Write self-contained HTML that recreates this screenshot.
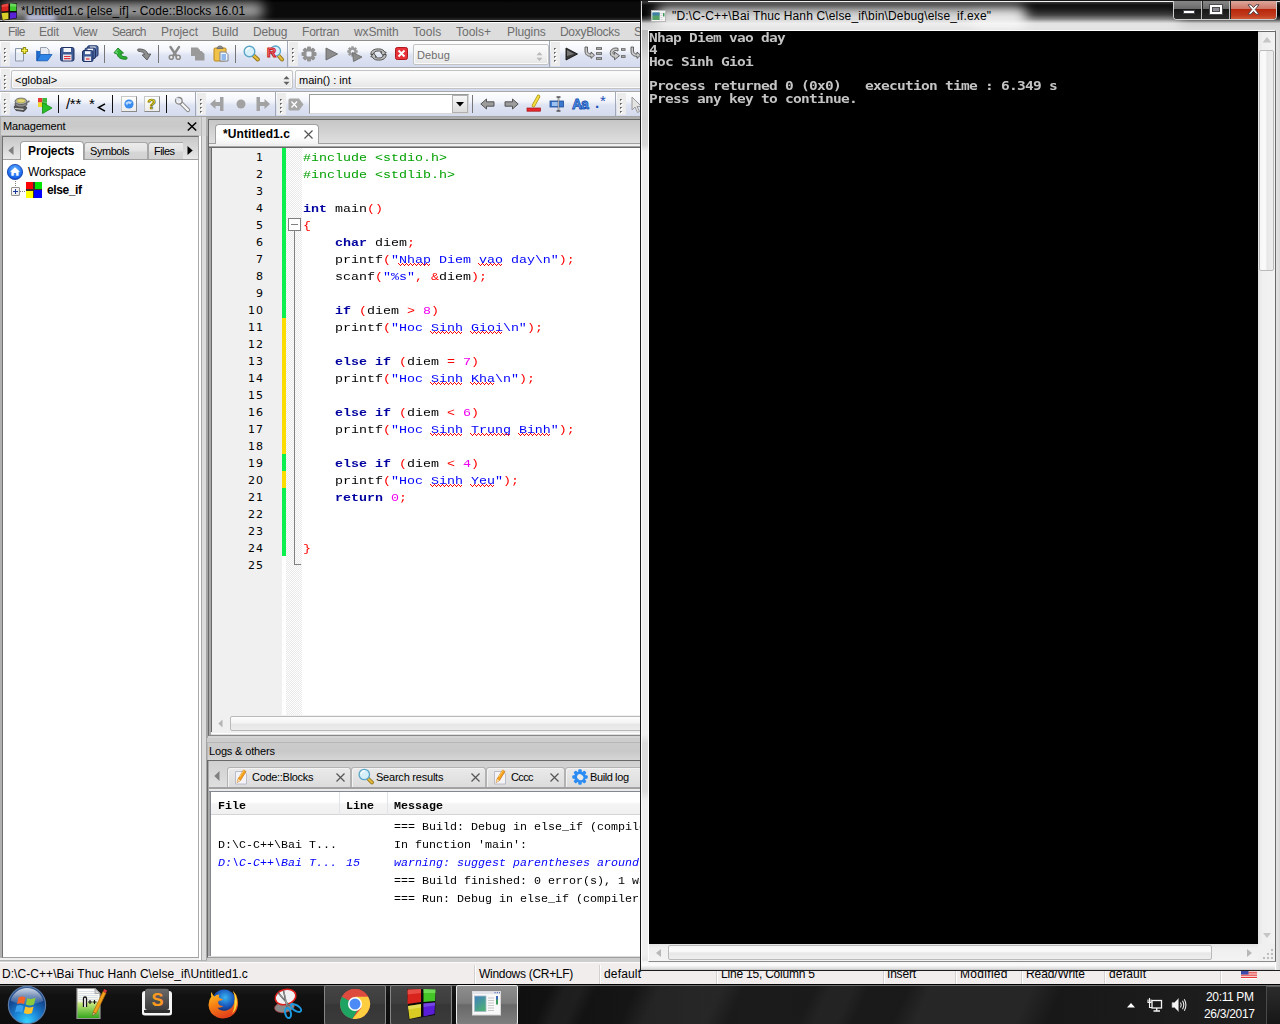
<!DOCTYPE html>
<html><head><meta charset="utf-8"><title>Code::Blocks</title>
<style>
*{box-sizing:border-box;margin:0;padding:0}
html,body{width:1280px;height:1024px;overflow:hidden;background:#000}
body{position:relative;font-family:"Liberation Sans",sans-serif;font-size:12px;color:#000}
.a{position:absolute}
.t{position:absolute;white-space:pre;line-height:14px}
svg{position:absolute;overflow:visible}
#cb{position:absolute;left:0;top:0;width:1280px;height:984px;background:#d4d4d4;overflow:hidden}
#cbtitle{left:0;top:0;width:1280px;height:22px;background:linear-gradient(#000 0,#0b0b0b 3px,#0b0b0b 17px,#2a2a2a 20px,#bdbdbd 20px,#bdbdbd 21px,#000 21px);overflow:hidden}
#menubar{left:0;top:22px;width:1280px;height:19px;background:#dddddd;border-top:1px solid #fff;border-bottom:1px solid #8e8e8e}
#menubar .t{top:2px;color:#6d6d6d;font-size:12px}
.tb{position:absolute;background:linear-gradient(#fefefe 0,#f3f5fb 38%,#dfe4f3 55%,#d4dbee 100%);border-right:1px solid #a2a8b8}
.grip{position:absolute;left:1px;top:1px;width:9px;bottom:1px;background:#ececec}
.grip i{position:absolute;left:3px;width:1px;height:1px;background:#5e5e5e;box-shadow:1px 0 0 #8a8a8a,0 1px 0 #8a8a8a,1px 1px 0 #fff,2px 1px 0 #fff,1px 2px 0 #fff}
.sep{position:absolute;width:1px;background:#777}
.combo{position:absolute;border:1px solid #c3c3c3;border-radius:2px;background:linear-gradient(#fdfdfd 0,#f2f2f2 50%,#e6e6e6 100%);box-shadow:inset 0 0 0 1px #fafafa}
#code .t{font-family:"Liberation Mono",monospace;font-size:11.667px;line-height:17px;height:17px;margin-top:1.5px;transform:scaleX(1.1428);transform-origin:0 0}
#code .t i{font-style:normal}
.ln{position:absolute;left:0;width:52px;text-align:right;letter-spacing:1px;font-family:"DejaVu Sans",sans-serif;font-size:11px;line-height:17px;height:17px;color:#000;margin-top:1px}
.k{color:#0000a0;font-weight:bold}.p{color:#00a000}.o{color:#ff0000}.s{color:#0000ff}.n{color:#f000f0}
.sq{position:absolute;height:3px;background:linear-gradient(90deg,#f00 0 25%,transparent 25%) 0 0/4px 1px repeat-x,linear-gradient(90deg,transparent 0 25%,#f00 25% 50%,transparent 50% 75%,#f00 75%) 0 1px/4px 1px repeat-x,linear-gradient(90deg,transparent 0 50%,#f00 50% 75%,transparent 75%) 0 2px/4px 1px repeat-x}
.ltab{top:29px;height:21px;background:linear-gradient(#eaeaea,#dbdbdb);border:1px solid #b2b2b2;border-bottom:0;border-radius:3px 3px 0 0;box-shadow:inset 1px 1px 0 #f3f3f3}
.lt{position:absolute;white-space:pre;font-family:"Liberation Mono",monospace;font-size:10.21px;line-height:13px;color:#000;transform:scaleX(1.1428);transform-origin:0 0}
.lt.w{color:#0000ff;font-style:italic}
.ss{position:absolute;top:2px;width:1px;height:19px;background:#d4d0d0;box-shadow:1px 0 0 #fff}
#ctext{font-family:"DejaVu Sans Mono","Liberation Mono",monospace;font-weight:bold;font-size:14.5px;letter-spacing:-.729px;line-height:14.118px;color:#c4c4c4;white-space:pre;transform:scaleY(.85);transform-origin:0 0}
#ctext div{height:14.118px}
.tbtn{top:1px;height:40px;background:linear-gradient(#454545 0,#3d3d3d 45%,#363636 50%,#3b3b3b 100%);border:1px solid #858585;border-radius:2px}
.mono{font-family:"Liberation Mono",monospace}
</style></head>
<body>
<div id="cb">
  <div id="cbtitle" class="a">
    <div class="a" style="left:2px;top:3px;width:262px;height:15px;background:#fff;opacity:.66;filter:blur(6px);border-radius:8px"></div>
    <div class="a" style="left:26px;top:15px;width:30px;height:5px;background:#d4d8ff;opacity:.95;filter:blur(2px);border-radius:3px"></div>
    <svg style="left:1px;top:2px" width="17" height="19" viewBox="0 0 16 18">
      <path d="M0 2 L15 1.200 L15 15.500 L1.200 17.500 Z" fill="#0a0a0a"/><path d="M0.5 2.5 L7 1.5 L7 8.5 L0.5 9 Z" fill="#d8231f"/><path d="M0.5 2.5 L7 1.5 L7 4 L0.5 5 Z" fill="#f0605a" opacity=".6"/>
      <path d="M8.5 1.5 L14.5 2 L14.5 8.5 L8.5 8.5 Z" fill="#3fc82c"/><path d="M8.5 1.5 L14.5 2 L14.5 4.5 L8.5 4 Z" fill="#8be87c" opacity=".6"/>
      <path d="M0.5 10.5 L7 10 L7 16 L1.5 17 Z" fill="#d9cf2a"/>
      <path d="M8.5 10 L14.5 10 L14.5 15 L8.5 16 Z" fill="#5a22d8"/>
    </svg>
    <div class="t" style="left:21px;top:4px;font-size:12px;letter-spacing:.08px">*Untitled1.c [else_if] - Code::Blocks 16.01</div>
  </div>
  <div id="menubar" class="a"><div class="t" style="left:8px;letter-spacing:-0.61px">File</div><div class="t" style="left:39px;letter-spacing:-0.23px">Edit</div><div class="t" style="left:73px;letter-spacing:-0.43px">View</div><div class="t" style="left:112px;letter-spacing:-0.71px">Search</div><div class="t" style="left:161px;letter-spacing:-0.06px">Project</div><div class="t" style="left:212px;letter-spacing:-0.05px">Build</div><div class="t" style="left:253px;letter-spacing:-0.22px">Debug</div><div class="t" style="left:302px;letter-spacing:-0.2px">Fortran</div><div class="t" style="left:354px;letter-spacing:-0.1px">wxSmith</div><div class="t" style="left:413px;letter-spacing:0.06px">Tools</div><div class="t" style="left:456px;letter-spacing:0px">Tools+</div><div class="t" style="left:507px;letter-spacing:-0.1px">Plugins</div><div class="t" style="left:560px;letter-spacing:-0.3px">DoxyBlocks</div><div class="t" style="left:634px;letter-spacing:-0.3px">Settings</div></div>
  <div id="toolbars" class="a" style="left:0;top:41px;width:1280px;height:75px;background:#f0f0f0">
    <!-- row 1 : y 41..66 -->
    <div class="tb" style="left:0;top:0;width:288px;height:26px">
      <div class="grip"><i style="top:6px"></i><i style="top:10px"></i><i style="top:14px"></i><i style="top:18px"></i></div>
      <!-- new -->
      <svg style="left:14px;top:5px" width="16" height="16" viewBox="0 0 16 16"><path d="M1.5 2.5h8v12.5h-8z" fill="#e4eaf4" stroke="#8d97aa"/><path d="M2.5 3.5h6v3h-6z" fill="#fff" opacity=".8"/><path d="M10.5 1v7M7 4.5h7" stroke="#8f8a10" stroke-width="3.2"/><path d="M10.5 2v5M8 4.5h5" stroke="#f4ee4a" stroke-width="1.4"/></svg>
      <!-- open -->
      <svg style="left:36px;top:5px" width="17" height="16" viewBox="0 0 17 16"><path d="M4.5 1.5h6l2.5 2.5v6h-8.500z" fill="#e8ecf2" stroke="#98a0ae"/><path d="M0.800 5h3.500v9.500h-3.500z" fill="#1f6fd0"/><path d="M0.800 14.800 L4.500 8.500 H16 L11.500 14.800 Z" fill="#2f86e6" stroke="#1558b0" stroke-width=".8"/><path d="M0.800 4.500v10.300" stroke="#1558b0"/></svg>
      <!-- save -->
      <svg style="left:60px;top:5px" width="15" height="16" viewBox="0 0 15 16"><rect x=".5" y="1.500" width="13.500" height="13.500" rx="1.800" fill="#3d5a94" stroke="#1f3263"/><rect x="3.500" y="2" width="7.500" height="4" fill="#f4f6fa"/><rect x="3" y="8.500" width="8.500" height="6" fill="#e9e4ea"/><path d="M4 10.500h6.500M4 12.700h6.500" stroke="#e0303a" stroke-width="1.200"/></svg>
      <!-- save all -->
      <svg style="left:82px;top:4px" width="17" height="18" viewBox="0 0 17 18"><rect x="5.500" y=".8" width="10.500" height="10.500" rx="1.500" fill="#5671a8" stroke="#1f3263"/><rect x="8" y="1.500" width="5.500" height="2.500" fill="#f4f6fa"/><rect x="3" y="3" width="10.500" height="10.500" rx="1.500" fill="#4c679f" stroke="#1f3263"/><rect x="5.500" y="3.700" width="5.500" height="2.500" fill="#f4f6fa"/><rect x=".5" y="5.500" width="10.500" height="11" rx="1.500" fill="#3d5a94" stroke="#1f3263"/><rect x="3" y="6.200" width="5.500" height="3" fill="#f4f6fa"/><rect x="2.500" y="11.500" width="6.500" height="4.500" fill="#e9e4ea"/><path d="M4 14h3.500" stroke="#e0303a" stroke-width="1.300"/></svg>
      <div class="sep" style="left:104px;top:4px;height:18px"></div>
      <!-- undo -->
      <svg style="left:113px;top:6px" width="15" height="14" viewBox="0 0 15 14"><path d="M5 1 L1 5.800 L4.300 7.200 C4.800 10.500 7.500 12.300 13 12.300 C14.500 12.300 14.500 9.800 13 9.800 C10 9.800 8.300 9 7.800 6.500 L10.500 6 Z" fill="#2cb034" stroke="#157a1c" stroke-width=".9" stroke-linejoin="round"/><path d="M5 2.500 L2.500 5.300 L5 6.300" fill="none" stroke="#8be890" stroke-width=".9"/></svg>
      <!-- redo -->
      <svg style="left:137px;top:6px" width="15" height="14" viewBox="0 0 15 14"><path d="M1.200 2 C0.400 2 0.400 4.200 1.500 4.300 C5 4.600 7 5.500 7.500 7.500 L5.200 8 L10 13 L13.800 7 L10.800 7.200 C10 3.500 6.500 1.800 1.200 2 Z" fill="#8e8e8e" stroke="#555" stroke-width=".9" stroke-linejoin="round"/></svg>
      <div class="sep" style="left:158px;top:4px;height:18px"></div>
      <!-- cut -->
      <svg style="left:168px;top:5px" width="14" height="15" viewBox="0 0 14 15"><path d="M2.500 1 L8.500 10 M11 1 L5 10" stroke="#8b8b8b" stroke-width="2.400" stroke-linecap="round"/><circle cx="3.300" cy="11.300" r="2" fill="#f0f0f0" stroke="#8b8b8b" stroke-width="1.600"/><circle cx="10.200" cy="11.300" r="2" fill="#f0f0f0" stroke="#8b8b8b" stroke-width="1.600"/></svg>
      <!-- copy -->
      <svg style="left:190px;top:5px" width="16" height="15" viewBox="0 0 16 15"><path d="M1 1.500h6.500l2.500 2.500v6h-9z" fill="#9a9a9a"/><path d="M5 5h6.500l3 3v6.500h-9.500z" fill="#9a9a9a"/></svg>
      <!-- paste -->
      <svg style="left:213px;top:4px" width="16" height="17" viewBox="0 0 16 17"><rect x="1" y="3" width="12" height="13" rx="1.200" fill="#f1c24a" stroke="#b8861c"/><path d="M4 3.500 c0-3.300 6-3.300 6 0z" fill="#8c8c8c" stroke="#666" stroke-width=".8"/><path d="M7 7h5.500l2.500 2.500v6.500h-8z" fill="#f4f7fb" stroke="#7b8494"/><path d="M8.500 10h4.500M8.500 12h4.500M8.500 14h4.500" stroke="#2f7ae0" stroke-width="1.100"/></svg>
      <div class="sep" style="left:235px;top:4px;height:18px"></div>
      <!-- find -->
      <svg style="left:243px;top:4px" width="17" height="17" viewBox="0 0 17 17"><path d="M9.500 9.500 L14.800 14.500" stroke="#8a6a10" stroke-width="4" stroke-linecap="round"/><path d="M9.500 9.500 L14.800 14.500" stroke="#e4bc3c" stroke-width="2.400" stroke-linecap="round"/><circle cx="6.500" cy="6.500" r="5.300" fill="#d8f0fa" stroke="#5aa6c8" stroke-width="1.400"/><path d="M3 6 a3.500 3.500 0 0 1 4-3" stroke="#fff" stroke-width="1.300" fill="none"/></svg>
      <!-- replace -->
      <svg style="left:267px;top:4px" width="17" height="17" viewBox="0 0 17 17"><path d="M10.500 9.500 L15 14.500" stroke="#8a6a10" stroke-width="4" stroke-linecap="round"/><path d="M10.500 9.500 L15 14.500" stroke="#e4bc3c" stroke-width="2.400" stroke-linecap="round"/><circle cx="8.500" cy="6" r="5" fill="#d8f0fa" stroke="#5aa6c8" stroke-width="1.300"/><text x="0" y="11.500" font-family="Liberation Sans,sans-serif" font-weight="bold" font-size="12.500" fill="#f4a0a0" stroke="#d01c24" stroke-width="1.100">R</text></svg>
    </div>
    <div class="tb" style="left:288px;top:0;width:262px;height:26px">
      <div class="grip"><i style="top:6px"></i><i style="top:10px"></i><i style="top:14px"></i><i style="top:18px"></i></div>
      <!-- gear -->
      <svg style="left:13px;top:5px" width="16" height="16" viewBox="0 0 16 16"><g fill="#929292"><circle cx="8" cy="8" r="5.600"/><rect x="6" y="0.500" width="4" height="15" rx="1"/><rect x=".5" y="6" width="15" height="4" rx="1"/><rect x="6" y=".5" width="4" height="15" rx="1" transform="rotate(45 8 8)"/><rect x="6" y=".5" width="4" height="15" rx="1" transform="rotate(-45 8 8)"/></g><rect x="5.500" y="5.500" width="5" height="5" rx="1" fill="#eef0f8"/></svg>
      <!-- run -->
      <svg style="left:37px;top:6px" width="14" height="14" viewBox="0 0 14 14"><path d="M1 1 L12.500 7 L1 13 Z" fill="#8d8d8d" stroke="#666" stroke-width=".9" stroke-linejoin="round"/></svg>
      <!-- build & run -->
      <svg style="left:59px;top:5px" width="16" height="16" viewBox="0 0 16 16"><g fill="#9a9a9a"><circle cx="5.500" cy="5.500" r="3.800"/><rect x="4.200" y=".3" width="2.600" height="10.400"/><rect x=".3" y="4.200" width="10.400" height="2.600"/><rect x="4.200" y=".3" width="2.600" height="10.400" transform="rotate(45 5.500 5.500)"/><rect x="4.200" y=".3" width="2.600" height="10.400" transform="rotate(-45 5.500 5.500)"/></g><circle cx="5.500" cy="5.500" r="1.700" fill="#eef0f8"/><path d="M5.500 6.500 L15 11 L6.500 15.500 Z" fill="#8d8d8d" stroke="#666" stroke-width=".8" stroke-linejoin="round"/></svg>
      <!-- rebuild -->
      <svg style="left:82px;top:7px" width="17" height="13" viewBox="0 0 17 13"><path d="M.8 6.500 C.8 1.500 6 .5 10 1 C12.500 1.300 14 2.500 14.800 4.200 L16.200 4.200 L13.400 8 L10.600 4.200 L12 4.200 C11 3.200 9.500 3 8.200 3 C5.200 3 3.700 4.200 3.500 6.500 Z" fill="#bcbcbc" stroke="#454545" stroke-width=".9" stroke-linejoin="round"/><path d="M.8 6.500 C.8 1.500 6 .5 10 1 C12.500 1.300 14 2.500 14.800 4.200 L16.200 4.200 L13.400 8 L10.600 4.200 L12 4.200 C11 3.200 9.500 3 8.200 3 C5.200 3 3.700 4.200 3.500 6.500 Z" fill="#bcbcbc" stroke="#454545" stroke-width=".9" stroke-linejoin="round" transform="rotate(180 8.500 6.500)"/></svg>
      <!-- abort -->
      <svg style="left:107px;top:6px" width="13" height="13" viewBox="0 0 13 13"><rect x=".5" y=".5" width="12" height="12" rx="1.800" fill="#e8323a" stroke="#b01820"/><path d="M3.500 3.500 L9.500 9.500 M9.500 3.500 L3.500 9.500" stroke="#fff" stroke-width="2"/></svg>
      <div class="combo" style="left:125px;top:3px;width:136px;height:21px"><div class="t" style="left:3px;top:3px;color:#6d6d6d;font-size:11px;letter-spacing:.14px">Debug</div>
        <svg style="left:122px;top:7px" width="7" height="9" viewBox="0 0 7 9"><path d="M3.500 0 L6.500 3.300 H.5Z M3.500 9 L6.500 5.700 H.5Z" fill="#b9b9b9"/></svg></div>
    </div>
    <div class="tb" style="left:550px;top:0;width:730px;height:26px">
      <div class="grip"><i style="top:6px"></i><i style="top:10px"></i><i style="top:14px"></i><i style="top:18px"></i></div>
      <svg style="left:15px;top:6px" width="14" height="14" viewBox="0 0 14 14"><path d="M1 1 L12.500 7 L1 13 Z" fill="#3a3a3a" stroke="#111" stroke-width=".9" stroke-linejoin="round"/><path d="M2 3 L9 7 L2 9Z" fill="#777"/></svg>
      <svg style="left:36px;top:5px" width="17" height="16" viewBox="0 0 17 16"><path d="M1.500 1 v4 c0 2 1.500 3 3.500 3 v-2 l3.500 3.200 l-3.500 3.200 v-2 c-4 0 -6-2-6-5.400 v-4z" fill="#c8c8c8" stroke="#555" stroke-width=".9" stroke-linejoin="round"/><path d="M10 2.500h6M10 7.500h6M10 12.500h6" stroke="#555" stroke-width="2.400"/><path d="M10.700 2.500h4.600M10.700 7.500h4.600M10.700 12.500h4.600" stroke="#a8a8a8" stroke-width="1"/></svg>
      <svg style="left:59px;top:5px" width="17" height="16" viewBox="0 0 17 16"><path d="M9 2.300 C4 1 .8 4 1.300 7.800 C1.800 10.300 3.800 11.300 5.500 11.300 L5.500 13.800 L10.500 9.700 L5.500 6 L5.500 8.400 C4.500 8.400 4 7.600 4 6.800 C4 4.800 6.500 4 9 5 Z" fill="#c8c8c8" stroke="#555" stroke-width=".9" stroke-linejoin="round"/><path d="M12 3.500h4.500M12 10.500h4.500" stroke="#555" stroke-width="2.400"/><path d="M12.700 3.500h3.100M12.700 10.500h3.100" stroke="#a8a8a8" stroke-width="1"/></svg>
      <svg style="left:82px;top:5px" width="17" height="16" viewBox="0 0 17 16"><path d="M1.500 1 v4 c0 2 1.500 3 3.500 3 v-2 l3.500 3.200 l-3.500 3.200 v-2 c-4 0 -6-2-6-5.400 v-4z" fill="#c8c8c8" stroke="#555" stroke-width=".9" stroke-linejoin="round"/></svg>
    </div>
    <!-- row 2 : y 68..91 -->
    <div class="a" style="left:0;top:26px;width:1280px;height:1px;background:#a8a8a8"></div>
    <div class="tb" style="left:0;top:27px;width:1280px;height:23px;border-right:0">
      <div class="grip"><i style="top:6px"></i><i style="top:10px"></i><i style="top:14px"></i><i style="top:18px"></i></div>
      <div class="combo" style="left:11px;top:2px;width:282px;height:19px"><div class="t" style="left:3px;top:2px;font-size:11px">&lt;global&gt;</div>
        <svg style="left:271px;top:5px" width="7" height="9" viewBox="0 0 7 9"><path d="M3.500 0 L6.500 3.300 H.5Z M3.500 9 L6.500 5.700 H.5Z" fill="#606060"/></svg></div>
      <div class="combo" style="left:295px;top:2px;width:990px;height:19px"><div class="t" style="left:3px;top:2px;font-size:11px">main() : int</div></div>
    </div>
    <div class="a" style="left:0;top:50px;width:1280px;height:1px;background:#a8a8a8"></div>
    <!-- row 3 : y 92..116 -->
    <div class="tb" style="left:0;top:51px;width:196px;height:24px">
      <div class="grip"><i style="top:6px"></i><i style="top:10px"></i><i style="top:14px"></i><i style="top:18px"></i></div>
      <!-- db icon -->
      <svg style="left:13px;top:5px" width="17" height="16" viewBox="0 0 17 16"><path d="M1 10 L3 13.500 L11 14.500 L14 11 L12 8.500 L2.500 8Z" fill="#555" stroke="#333" stroke-width=".7"/><path d="M2 11.500 L10.500 12.300" stroke="#ddd" stroke-width="1.200"/><ellipse cx="8" cy="7" rx="6" ry="3.200" fill="#8a8a8a" stroke="#444" stroke-width=".8"/><ellipse cx="8" cy="4.300" rx="6" ry="3.200" fill="#b0b0b0" stroke="#555" stroke-width=".8"/><ellipse cx="8" cy="3.800" rx="4.200" ry="2" fill="#e2d878" stroke="#a89c30" stroke-width=".6"/><path d="M14 5.500 L16.500 4" stroke="#777" stroke-width="1.500"/></svg>
      <!-- run blocks -->
      <svg style="left:37px;top:6px" width="16" height="16" viewBox="0 0 16 16"><rect x="1" y="0" width="4.500" height="4.500" fill="#e8383a"/><rect x="5.500" y="0" width="4.500" height="4.500" fill="#3cb83c"/><rect x="1" y="4.500" width="4.500" height="4.500" fill="#f0d828"/><rect x="5.500" y="4.500" width="4.500" height="4.500" fill="#3cb83c"/><path d="M5.500 4.500 L15 10 L5.500 15.500 Z" fill="#28c028" stroke="#108a10" stroke-width=".8" stroke-linejoin="round"/></svg>
      <div class="sep" style="left:58px;top:3px;height:18px;background:#111"></div>
      <div class="t" style="left:66px;top:4px;font-size:15px;line-height:16px;letter-spacing:-.3px">/**</div>
      <div class="t" style="left:89px;top:4px;font-size:15px;line-height:16px">*</div>
      <svg style="left:97px;top:11px" width="9" height="9" viewBox="0 0 9 9"><path d="M8 .8 L1.500 4.500 L8 8.200" fill="none" stroke="#000" stroke-width="1.500"/></svg>
      <div class="sep" style="left:112px;top:3px;height:18px;background:#111"></div>
      <!-- globe button -->
      <div class="a" style="left:121px;top:4px;width:16px;height:16px;background:linear-gradient(#fff,#ececec);border:1px solid #c8c8c8;border-right-color:#8a8a8a;border-bottom-color:#8a8a8a"></div>
      <svg style="left:124px;top:7px" width="10" height="10" viewBox="0 0 10 10"><circle cx="5" cy="5" r="4.600" fill="#3a8cf0"/><path d="M1.500 4 C3 2 6 1.500 8 3 L6.500 5 L4 4.500 L3 6.500Z" fill="#cfe6ff" opacity=".9"/></svg>
      <!-- help button -->
      <div class="a" style="left:144px;top:4px;width:16px;height:16px;background:linear-gradient(#fff,#ececec);border:1px solid #c8c8c8;border-right-color:#8a8a8a;border-bottom-color:#8a8a8a"></div>
      <div class="t" style="left:147.500px;top:4px;font-size:14px;line-height:16px;font-weight:bold;color:#f0e428;-webkit-text-stroke:.7px #6a6400">?</div>
      <div class="sep" style="left:166px;top:3px;height:18px;background:#111"></div>
      <!-- wrench -->
      <svg style="left:174px;top:4px" width="17" height="17" viewBox="0 0 17 17"><path d="M5.500 5.500 L14 14" stroke="#8a8a8a" stroke-width="4.200" stroke-linecap="round"/><path d="M5.500 5.500 L14 14" stroke="#f6f6f6" stroke-width="2.400" stroke-linecap="round"/><circle cx="4.800" cy="4.800" r="3.300" fill="#f2f2f2" stroke="#8a8a8a" stroke-width="1.300"/><path d="M2.500 2 L5.500 5" stroke="#dfe4f3" stroke-width="2.200"/></svg>
    </div>
    <div class="tb" style="left:196px;top:51px;width:80px;height:24px">
      <div class="grip"><i style="top:6px"></i><i style="top:10px"></i><i style="top:14px"></i><i style="top:18px"></i></div>
      <svg style="left:14px;top:5px" width="14" height="14" viewBox="0 0 14 14"><path d="M0 7 L5.500 2 V5 H10 V0 H13.500 V14 H10 V9 H5.500 V12 Z" fill="#a2a2a2"/></svg>
      <svg style="left:40px;top:7px" width="10" height="10" viewBox="0 0 10 10"><circle cx="5" cy="5" r="4.500" fill="#a2a2a2"/></svg>
      <svg style="left:60px;top:5px" width="14" height="14" viewBox="0 0 14 14"><path d="M14 7 L8.500 2 V5 H4 V0 H.5 V14 H4 V9 H8.500 V12 Z" fill="#a2a2a2"/></svg>
    </div>
    <div class="tb" style="left:276px;top:51px;width:340px;height:24px">
      <div class="grip"><i style="top:6px"></i><i style="top:10px"></i><i style="top:14px"></i><i style="top:18px"></i></div>
      <svg style="left:12px;top:6px" width="16" height="13" viewBox="0 0 16 13"><path d="M.5 2 Q.5 .5 2 .5 H11 L15.500 6.500 L11 12.500 H2 Q.5 12.500 .5 11 Z" fill="#a6a6a6"/><path d="M3.500 3.500 L9 9.500 M9 3.500 L3.500 9.500" stroke="#fff" stroke-width="1.300"/></svg>
      <div class="a" style="left:33px;top:2px;width:160px;height:20px;background:#fff;border:1px solid #9a9a9a;border-right-color:#d8d8d8;border-bottom-color:#d8d8d8"></div>
      <div class="a" style="left:176px;top:3px;width:16px;height:18px;background:linear-gradient(#f8f8f8,#dcdcdc);border:1px solid #b0b0b0"></div>
      <svg style="left:180px;top:10px" width="8" height="5" viewBox="0 0 8 5"><path d="M0 0 H8 L4 4.500Z" fill="#000"/></svg>
      <div class="sep" style="left:196px;top:3px;height:18px;background:#777"></div>
      <svg style="left:204px;top:6px" width="15" height="12" viewBox="0 0 15 12"><path d="M.8 6 L6.500 1 V3.800 H14 V8.200 H6.500 V11 Z" fill="#9c9c9c" stroke="#4a4a4a" stroke-width=".9" stroke-linejoin="round"/></svg>
      <svg style="left:228px;top:6px" width="15" height="12" viewBox="0 0 15 12"><path d="M14.200 6 L8.500 1 V3.800 H1 V8.200 H8.500 V11 Z" fill="#9c9c9c" stroke="#4a4a4a" stroke-width=".9" stroke-linejoin="round"/></svg>
      <svg style="left:250px;top:3px" width="16" height="18" viewBox="0 0 16 18"><path d="M7.500 10.500 L12.500 1.500" stroke="#a89010" stroke-width="3.600" stroke-linecap="round"/><path d="M7.500 10.500 L12.500 1.500" stroke="#f4dc40" stroke-width="2.200" stroke-linecap="round"/><rect x="1" y="13" width="13.500" height="3.200" fill="#e8282c" stroke="#a01418" stroke-width=".7"/></svg>
      <svg style="left:273px;top:4px" width="16" height="16" viewBox="0 0 16 16"><rect x="1" y="5" width="13.500" height="6" fill="#3a78d0" stroke="#1c4a96" stroke-width=".8"/><rect x="3" y="6" width="6" height="4" fill="#9cc0f0"/><path d="M9.500 1 V15 M7.500 1 H11.500 M7.500 15 H11.500" stroke="#555" stroke-width="1.500"/><path d="M9.500 2 V14" stroke="#e8e8e8" stroke-width=".6"/></svg>
      <div class="t" style="left:296px;top:4px;font-size:14px;line-height:16px;font-weight:bold;letter-spacing:-1px;color:#5a9cf0;-webkit-text-stroke:.8px #1450b0">Aa</div>
      <div class="t" style="left:319px;top:3px;font-size:15px;line-height:16px;color:#1c50b8;font-weight:bold">.</div>
      <div class="t" style="left:324px;top:1px;font-size:15px;line-height:16px;color:#1c50b8">*</div>
    </div>
    <div class="tb" style="left:616px;top:51px;width:664px;height:24px">
      <div class="grip"><i style="top:6px"></i><i style="top:10px"></i><i style="top:14px"></i><i style="top:18px"></i></div>
      <svg style="left:15px;top:4px" width="12" height="18" viewBox="0 0 12 18"><path d="M1 1 V14 L4 11 L6.500 16.500 L8.500 15.500 L6 10.500 H10.500 Z" fill="#e4e4e4" stroke="#9a9a9a" stroke-width="1"/></svg>
    </div>
  </div>
  <!-- band under toolbars -->
  <div class="a" style="left:0;top:116px;width:1280px;height:3px;background:linear-gradient(#a2a2a2 0 1px,#adadad 1px)"></div>
  <!-- ===== Management panel ===== -->
  <div id="mgmt" class="a" style="left:0;top:116px;width:199px;height:846px">
    <div class="a" style="left:0;top:1px;width:201px;height:19px;background:linear-gradient(#cbcbcb 0,#c9c9c9 50%,#d6d6d6 100%);border-left:1px solid #b0b0b0"></div>
    <div class="t" style="left:3px;top:3px;font-size:11px;letter-spacing:-.19px">Management</div>
    <svg style="left:187px;top:6px" width="10" height="9" viewBox="0 0 10 9"><path d="M.8 .5 L9.200 8.500 M9.200 .5 L.8 8.500" stroke="#000" stroke-width="1.500"/></svg>
    <!-- notebook frame -->
    <div class="a" style="left:0;top:19px;width:199px;height:1px;background:#b4b4b4"></div>
    <div class="a" style="left:0;top:20px;width:2px;height:824px;background:#b0b0b0"></div>
    <div class="a" style="left:2px;top:20px;width:197px;height:822px;background:#f0f0f0;border:1px solid #707070;border-right-color:#a8a8a8;border-bottom-color:#a0a0a0"></div>
    <div class="a" style="left:3px;top:21px;width:195px;height:22px;background:linear-gradient(#c8c8c8,#e8e8e8)"></div>
    <svg style="left:8px;top:30px" width="6" height="9" viewBox="0 0 6 9"><path d="M5.500 0 V9 L.3 4.500Z" fill="#808080"/></svg>
    <!-- tabs -->
    <div class="a" style="left:84px;top:26px;width:64px;height:18px;background:linear-gradient(#ececec 0,#e2e2e2 48%,#d6d6d6 52%,#d2d2d2 100%);border:1px solid #a8a8a8;border-bottom:0;border-radius:3px 3px 0 0"></div>
    <div class="a" style="left:148px;top:26px;width:35px;height:18px;background:linear-gradient(#ececec 0,#e2e2e2 48%,#d6d6d6 52%,#d2d2d2 100%);border:1px solid #a8a8a8;border-bottom:0;border-right:0;border-radius:3px 0 0 0"></div>
    <div class="a" style="left:3px;top:43px;width:195px;height:1px;background:#a0a0a0"></div>
    <div class="a" style="left:20px;top:25px;width:64px;height:20px;background:#fff;border:1px solid #a0a0a0;border-bottom:0;border-radius:4px 4px 0 0"></div>
    <div class="t" style="left:28px;top:28px;font-size:12px;font-weight:bold;letter-spacing:-.12px">Projects</div>
    <div class="t" style="left:90px;top:28px;font-size:11px;letter-spacing:-.45px">Symbols</div>
    <div class="t" style="left:154px;top:28px;font-size:11px;letter-spacing:-.56px">Files</div>
    <svg style="left:187px;top:30px" width="6" height="9" viewBox="0 0 6 9"><path d="M.5 0 V9 L5.700 4.500Z" fill="#000"/></svg>
    <!-- tree -->
    <div class="a" style="left:3px;top:44px;width:195px;height:797px;background:#fff"></div>
    <svg style="left:7px;top:48px" width="16" height="16" viewBox="0 0 16 16"><defs><radialGradient id="wg" cx=".5" cy=".35" r=".7"><stop offset="0" stop-color="#6ab6ff"/><stop offset=".7" stop-color="#1d6cf0"/><stop offset="1" stop-color="#0b3cb0"/></radialGradient></defs><circle cx="8" cy="8" r="7.600" fill="url(#wg)" stroke="#0a3aa8" stroke-width=".8"/><path d="M8 3.200 L13 7.800 H11.600 V11.800 H9.200 V9 H6.800 V11.800 H4.400 V7.800 H3 Z" fill="#fff"/></svg>
    <div class="t" style="left:28px;top:49px;font-size:12px;letter-spacing:-.23px">Workspace</div>
    <div class="a" style="left:15px;top:65px;width:1px;height:6px;background:repeating-linear-gradient(#808080 0 1px,transparent 1px 2px)"></div>
    <div class="a" style="left:11px;top:71px;width:9px;height:9px;background:linear-gradient(135deg,#fff,#e4e4e4);border:1px solid #919191;border-radius:1px"></div>
    <div class="a" style="left:13px;top:75px;width:5px;height:1px;background:#1c3a9c"></div><div class="a" style="left:15px;top:73px;width:1px;height:5px;background:#1c3a9c"></div>
    <div class="a" style="left:20px;top:75px;width:6px;height:1px;background:repeating-linear-gradient(90deg,#808080 0 1px,transparent 1px 2px)"></div>
    <svg style="left:26px;top:66px" width="16" height="16" viewBox="0 0 16 16"><rect x="0" y="0" width="16" height="16" fill="#3a2a2a"/><rect x="0" y="0" width="7" height="7" fill="#ff0000"/><rect x="9" y="0" width="7" height="7" fill="#00e400"/><rect x="0" y="9" width="7" height="7" fill="#ffff00"/><rect x="8" y="8" width="8" height="8" fill="#0000ff"/></svg>
    <div class="t" style="left:47px;top:67px;font-size:12px;font-weight:bold;letter-spacing:-.39px">else_if</div>
    <div class="a" style="left:0;top:842px;width:201px;height:2px;background:#f0f0f0"></div>
    <div class="a" style="left:0;top:844px;width:1280px;height:2px;background:linear-gradient(#b0b0b0 0 1px,#d0d0d0 1px)"></div>
  </div>
  <!-- sash between mgmt and editor/logs : x=199..207 -->
  <div class="a" style="left:199px;top:119px;width:9px;height:841px;background:linear-gradient(90deg,#fff 0 2px,#a8a8a8 2px 3px,#dcdcdc 3px 7px,#a4a4a4 7px 9px)"></div>
  <div class="a" style="left:199px;top:117px;width:9px;height:19px;background:linear-gradient(90deg,#d2d2d2 0 2px,#b8b8b8 2px 3px,#d6d6d6 3px 7px,#b0b0b0 7px 9px)"></div>
  <!-- ===== Editor notebook ===== -->
  <div id="editor" class="a" style="left:208px;top:119px;width:1072px;height:619px">
    <div class="a" style="left:0;top:0;width:1072px;height:617px;background:#a8a8a8;border:1px solid #686868;border-bottom-color:#8a8a8a"></div>
    <div class="a" style="left:1px;top:1px;width:1071px;height:26px;background:linear-gradient(#c6c6c6,#e2e2e2)"></div>
    <div class="a" style="left:1px;top:24px;width:1071px;height:1px;background:#a0a0a0"></div>
    <div class="a" style="left:7px;top:5px;width:104px;height:21px;background:linear-gradient(#fff 0,#fff 55%,#f1f1f1 100%);border:1px solid #a0a0a0;border-bottom:0;border-radius:4px 4px 0 0"></div>
    <div class="t" style="left:15px;top:8px;font-size:12px;font-weight:bold;letter-spacing:.08px">*Untitled1.c</div>
    <svg style="left:96px;top:11px" width="9" height="9" viewBox="0 0 9 9"><path d="M.5 .5 L8.500 8.500 M8.500 .5 L.5 8.500" stroke="#555" stroke-width="1.200"/></svg>
    <div class="a" style="left:1px;top:25px;width:1071px;height:2px;background:#efefef"></div>
    <div class="a" style="left:1px;top:27px;width:1071px;height:2px;background:linear-gradient(#a4a4a4 0 1px,#686868 1px)"></div>
    <div class="a" style="left:3px;top:28px;width:1px;height:586px;background:#686868"></div>
    <div id="code" class="a" style="left:4px;top:29px;width:1068px;height:567px;background:#fff;overflow:hidden">
      <div class="a" style="left:0;top:0;width:70px;height:567px;background:#f0f0f0"></div>
      <div class="a" style="left:74px;top:0;width:16px;height:567px;background:#f5f5f5;background-image:repeating-conic-gradient(#e9e9e9 0 25%,#fff 0 50%);background-size:2px 2px"></div>
      <div class="a" style="left:70px;top:0px;width:4px;height:170px;background:#0cf04e"></div>
      <div class="a" style="left:70px;top:170px;width:4px;height:136px;background:#fbdc00"></div>
      <div class="a" style="left:70px;top:306px;width:4px;height:17px;background:#0cf04e"></div>
      <div class="a" style="left:70px;top:323px;width:4px;height:17px;background:#fbdc00"></div>
      <div class="a" style="left:70px;top:340px;width:4px;height:68px;background:#0cf04e"></div>
      <div class="a" style="left:82px;top:82px;width:1px;height:334px;background:#808080"></div>
      <div class="a" style="left:82px;top:416px;width:7px;height:1px;background:#808080"></div>
      <div class="a" style="left:76px;top:70px;width:13px;height:13px;background:#fff;border:1px solid #808080"></div>
      <div class="a" style="left:79px;top:76px;width:7px;height:1px;background:#808080"></div>
      <div class="ln" style="top:0px">1</div><div class="t" style="left:91px;top:0px"><i class="p">#include &lt;stdio.h&gt;</i></div>
      <div class="ln" style="top:17px">2</div><div class="t" style="left:91px;top:17px"><i class="p">#include &lt;stdlib.h&gt;</i></div>
      <div class="ln" style="top:34px">3</div>
      <div class="ln" style="top:51px">4</div><div class="t" style="left:91px;top:51px"><b class="k">int</b> main<i class="o">()</i></div>
      <div class="ln" style="top:68px">5</div><div class="t" style="left:91px;top:68px"><i class="o">{</i></div>
      <div class="ln" style="top:85px">6</div><div class="t" style="left:91px;top:85px">    <b class="k">char</b> diem<i class="o">;</i></div>
      <div class="ln" style="top:102px">7</div><div class="t" style="left:91px;top:102px">    printf<i class="o">(</i><i class="s">"</i><i class="s">Nhap</i><i class="s"> Diem </i><i class="s">vao</i><i class="s"> day\n"</i><i class="o">);</i></div><div class="sq" style="left:186px;top:115px;width:32px"></div><div class="sq" style="left:266px;top:115px;width:24px"></div>
      <div class="ln" style="top:119px">8</div><div class="t" style="left:91px;top:119px">    scanf<i class="o">(</i><i class="s">"%s"</i><i class="o">,</i> <i class="o">&amp;</i>diem<i class="o">);</i></div>
      <div class="ln" style="top:136px">9</div>
      <div class="ln" style="top:153px">10</div><div class="t" style="left:91px;top:153px">    <b class="k">if</b> <i class="o">(</i>diem <i class="o">&gt;</i> <i class="n">8</i><i class="o">)</i></div>
      <div class="ln" style="top:170px">11</div><div class="t" style="left:91px;top:170px">    printf<i class="o">(</i><i class="s">"Hoc </i><i class="s">Sinh</i><i class="s"> </i><i class="s">Gioi</i><i class="s">\n"</i><i class="o">);</i></div><div class="sq" style="left:218px;top:183px;width:32px"></div><div class="sq" style="left:258px;top:183px;width:32px"></div>
      <div class="ln" style="top:187px">12</div>
      <div class="ln" style="top:204px">13</div><div class="t" style="left:91px;top:204px">    <b class="k">else</b> <b class="k">if</b> <i class="o">(</i>diem <i class="o">=</i> <i class="n">7</i><i class="o">)</i></div>
      <div class="ln" style="top:221px">14</div><div class="t" style="left:91px;top:221px">    printf<i class="o">(</i><i class="s">"Hoc </i><i class="s">Sinh</i><i class="s"> </i><i class="s">Kha</i><i class="s">\n"</i><i class="o">);</i></div><div class="sq" style="left:218px;top:234px;width:32px"></div><div class="sq" style="left:258px;top:234px;width:24px"></div>
      <div class="ln" style="top:238px">15</div>
      <div class="ln" style="top:255px">16</div><div class="t" style="left:91px;top:255px">    <b class="k">else</b> <b class="k">if</b> <i class="o">(</i>diem <i class="o">&lt;</i> <i class="n">6</i><i class="o">)</i></div>
      <div class="ln" style="top:272px">17</div><div class="t" style="left:91px;top:272px">    printf<i class="o">(</i><i class="s">"Hoc </i><i class="s">Sinh</i><i class="s"> </i><i class="s">Trung</i><i class="s"> </i><i class="s">Binh</i><i class="s">"</i><i class="o">);</i></div><div class="sq" style="left:218px;top:285px;width:32px"></div><div class="sq" style="left:258px;top:285px;width:40px"></div><div class="sq" style="left:306px;top:285px;width:32px"></div>
      <div class="ln" style="top:289px">18</div>
      <div class="ln" style="top:306px">19</div><div class="t" style="left:91px;top:306px">    <b class="k">else</b> <b class="k">if</b> <i class="o">(</i>diem <i class="o">&lt;</i> <i class="n">4</i><i class="o">)</i></div>
      <div class="ln" style="top:323px">20</div><div class="t" style="left:91px;top:323px">    printf<i class="o">(</i><i class="s">"Hoc </i><i class="s">Sinh</i><i class="s"> </i><i class="s">Yeu</i><i class="s">"</i><i class="o">);</i></div><div class="sq" style="left:218px;top:336px;width:32px"></div><div class="sq" style="left:258px;top:336px;width:24px"></div>
      <div class="ln" style="top:340px">21</div><div class="t" style="left:91px;top:340px">    <b class="k">return</b> <i class="n">0</i><i class="o">;</i></div>
      <div class="ln" style="top:357px">22</div>
      <div class="ln" style="top:374px">23</div>
      <div class="ln" style="top:391px">24</div><div class="t" style="left:91px;top:391px"><i class="o">}</i></div>
      <div class="ln" style="top:408px">25</div>
    </div>
    <div class="a" style="left:4px;top:596px;width:1068px;height:17px;background:#f0f0f0"></div>
    <svg style="left:10px;top:600px" width="5" height="9" viewBox="0 0 5 9"><path d="M4.500 .5 V8.500 L.3 4.500Z" fill="#b4b4b4"/></svg>
    <div class="a" style="left:22px;top:597px;width:1060px;height:15px;background:linear-gradient(#fdfdfd 0,#f4f4f4 45%,#e6e6e6 55%,#ececec 100%);border:1px solid #b9b9b9;border-radius:2px"></div>
    <div class="a" style="left:3px;top:613px;width:1069px;height:3px;background:linear-gradient(#f0f0f0 0 1px,#fff 1px 2px,#dcdcdc 2px)"></div>
  </div>
  <!-- ===== Logs & others ===== -->
  <div id="logs" class="a" style="left:207px;top:738px;width:1073px;height:224px;background:#cdcdcd">
    <div class="a" style="left:0;top:4px;width:1073px;height:18px;background:linear-gradient(#cbcbcb 0,#c9c9c9 50%,#d6d6d6 100%);border-top:1px solid #b6b6b6;border-left:1px solid #b6b6b6"></div>
    <div class="t" style="left:2px;top:6px;font-size:11px;letter-spacing:-.16px">Logs &amp; others</div>
    <!-- notebook frame -->
    <div class="a" style="left:0;top:22px;width:1073px;height:198px;background:#a8a8a8;border:1px solid #686868;border-bottom-color:#a0a0a0"></div>
    <div class="a" style="left:2px;top:23px;width:1071px;height:27px;background:linear-gradient(#cfcfcf,#e0e0e0)"></div>
    <svg style="left:7px;top:33px" width="6" height="10" viewBox="0 0 6 10"><path d="M5.500 0 V10 L.3 5Z" fill="#808080"/></svg>
    <!-- tabs : y=767..787 => top 29..49 -->
    <div class="a ltab" style="left:20px;width:124px"></div>
    <div class="a ltab" style="left:144px;width:135px"></div>
    <div class="a ltab" style="left:279px;width:79px"></div>
    <div class="a ltab" style="left:358px;width:140px"></div>
    <!-- tab 1 : Code::Blocks -->
    <svg style="left:27px;top:31px" width="14" height="16" viewBox="0 0 14 16"><path d="M1.500 2.500 H10 L12.500 5 V15 H1.500Z" fill="#f4f4f8" stroke="#b0b0c0" stroke-width=".8"/><path d="M3 13.500 L4 10 L9.500 1 L12 2.500 L6.500 11.500Z" fill="#f6a21c" stroke="#c06c08" stroke-width=".6"/><path d="M3 13.500 L4 10 L6.500 11.500Z" fill="#f6dcb0"/><path d="M5.500 8 L10.500 .5" stroke="#fbd070" stroke-width=".9"/></svg>
    <div class="t" style="left:45px;top:32px;font-size:11px;letter-spacing:-.30px">Code::Blocks</div>
    <svg style="left:129px;top:35px" width="9" height="9" viewBox="0 0 9 9"><path d="M.5 .5 L8.500 8.500 M8.500 .5 L.5 8.500" stroke="#555" stroke-width="1.200"/></svg>
    <!-- tab 2 : Search results -->
    <svg style="left:151px;top:30px" width="16" height="17" viewBox="0 0 16 17"><path d="M9.500 10 L14 14.500" stroke="#8a6a10" stroke-width="3.800" stroke-linecap="round"/><path d="M9.500 10 L14 14.500" stroke="#e4bc3c" stroke-width="2.200" stroke-linecap="round"/><circle cx="6.300" cy="6.500" r="5.200" fill="#d4eefa" stroke="#5aa6c8" stroke-width="1.300"/><path d="M3 6 a3.400 3.400 0 0 1 3.800 -3" stroke="#fff" stroke-width="1.300" fill="none"/></svg>
    <div class="t" style="left:169px;top:32px;font-size:11px;letter-spacing:-.22px">Search results</div>
    <svg style="left:264px;top:35px" width="9" height="9" viewBox="0 0 9 9"><path d="M.5 .5 L8.500 8.500 M8.500 .5 L.5 8.500" stroke="#555" stroke-width="1.200"/></svg>
    <!-- tab 3 : Cccc -->
    <svg style="left:286px;top:31px" width="14" height="16" viewBox="0 0 14 16"><path d="M1.500 2.500 H10 L12.500 5 V15 H1.500Z" fill="#f4f4f8" stroke="#b0b0c0" stroke-width=".8"/><path d="M3 13.500 L4 10 L9.500 1 L12 2.500 L6.500 11.500Z" fill="#f6a21c" stroke="#c06c08" stroke-width=".6"/><path d="M3 13.500 L4 10 L6.500 11.500Z" fill="#f6dcb0"/><path d="M5.500 8 L10.500 .5" stroke="#fbd070" stroke-width=".9"/></svg>
    <div class="t" style="left:304px;top:32px;font-size:11px;letter-spacing:-.65px">Cccc</div>
    <svg style="left:343px;top:35px" width="9" height="9" viewBox="0 0 9 9"><path d="M.5 .5 L8.500 8.500 M8.500 .5 L.5 8.500" stroke="#555" stroke-width="1.200"/></svg>
    <!-- tab 4 : Build log -->
    <svg style="left:365px;top:31px" width="16" height="16" viewBox="0 0 16 16"><g fill="#2b8cf4"><circle cx="8" cy="8" r="5.800"/><rect x="6.300" y=".3" width="3.400" height="15.400" rx="1"/><rect x=".3" y="6.300" width="15.400" height="3.400" rx="1"/><rect x="6.300" y=".3" width="3.400" height="15.400" rx="1" transform="rotate(45 8 8)"/><rect x="6.300" y=".3" width="3.400" height="15.400" rx="1" transform="rotate(-45 8 8)"/></g><ellipse cx="8.300" cy="8" rx="3.300" ry="2.700" fill="#e9e9e9" transform="rotate(35 8 8)"/></svg>
    <div class="t" style="left:383px;top:32px;font-size:11px;letter-spacing:-.40px">Build log</div>
    <!-- strip bottom -->
    <div class="a" style="left:2px;top:49px;width:1071px;height:2px;background:#a2a2a2"></div>
    <div class="a" style="left:2px;top:51px;width:1071px;height:3px;background:linear-gradient(#ebebeb 0 2px,#828790 2px)"></div>
    <!-- list -->
    <div class="a" style="left:3px;top:54px;width:1px;height:164px;background:#828790"></div><div class="a" style="left:4px;top:54px;width:1069px;height:164px;background:#fff"></div><div class="a" style="left:1px;top:218px;width:1072px;height:1px;background:#dcdcdc"></div>
    <div class="a" style="left:4px;top:54px;width:1069px;height:23px;background:linear-gradient(#fff 0,#fff 45%,#f4f4f5 55%,#f0f0f1 100%);border-bottom:1px solid #d5d5d5"></div>
    <div class="a" style="left:132px;top:54px;width:1px;height:23px;background:#e0e3e8"></div>
    <div class="a" style="left:180px;top:54px;width:1px;height:23px;background:#e0e3e8"></div>
    <div class="lt" style="left:11px;top:62px;font-weight:bold">File</div>
    <div class="lt" style="left:139px;top:62px;font-weight:bold">Line</div>
    <div class="lt" style="left:187px;top:62px;font-weight:bold">Message</div>
    <div class="lt" style="left:187px;top:83px">=== Build: Debug in else_if (compiler: GNU GCC Compiler) ===</div>
    <div class="lt" style="left:11px;top:101px">D:\C-C++\Bai T...</div>
    <div class="lt" style="left:187px;top:101px">In function 'main':</div>
    <div class="lt w" style="left:11px;top:119px">D:\C-C++\Bai T...</div>
    <div class="lt w" style="left:139px;top:119px">15</div>
    <div class="lt w" style="left:187px;top:119px">warning: suggest parentheses around assignment used as truth value [-Wparentheses]</div>
    <div class="lt" style="left:187px;top:137px">=== Build finished: 0 error(s), 1 warning(s) (0 minute(s), 1 second(s)) ===</div>
    <div class="lt" style="left:187px;top:155px">=== Run: Debug in else_if (compiler: GNU GCC Compiler) ===</div>
  </div>
  <!-- ===== status bar ===== -->
  <div id="status" class="a" style="left:0;top:962px;width:1280px;height:22px;background:#f1eded;border-top:1px solid #fbfbfb">
    <div class="t" style="left:2px;top:4px;letter-spacing:.06px">D:\C-C++\Bai Thuc Hanh C\else_if\Untitled1.c</div>
    <div class="ss" style="left:474px"></div><div class="t" style="left:479px;top:4px;letter-spacing:-0.29px">Windows (CR+LF)</div>
    <div class="ss" style="left:599px"></div><div class="t" style="left:604px;top:4px;letter-spacing:0.16px">default</div>
    <div class="ss" style="left:716px"></div><div class="t" style="left:721px;top:4px;letter-spacing:-0.21px">Line 15, Column 5</div>
    <div class="ss" style="left:883px"></div><div class="t" style="left:887px;top:4px;letter-spacing:-0.2px">Insert</div>
    <div class="ss" style="left:955px"></div><div class="t" style="left:960px;top:4px;letter-spacing:0.31px">Modified</div>
    <div class="ss" style="left:1021px"></div><div class="t" style="left:1026px;top:4px;letter-spacing:-0.09px">Read/Write</div>
    <div class="ss" style="left:1104px"></div><div class="t" style="left:1109px;top:4px;letter-spacing:0.16px">default</div>
    <div class="ss" style="left:1220px"></div>
    <svg style="left:1241px;top:7px" width="16" height="9" viewBox="0 0 16 11" preserveAspectRatio="none"><rect width="16" height="11" fill="#fff"/><path d="M0 .7H16M0 3.500H16M0 6.300H16M0 9.100H16" stroke="#e23a3a" stroke-width="1.400"/><rect width="7.500" height="5.500" fill="#3a4aa8"/></svg>
  </div>
</div><!-- /cb -->
<!-- ===== Console window ===== -->
<div id="con" class="a" style="left:640px;top:0;width:640px;height:971px;background:#f2f2f2;border:1px solid #1c1c1c;border-right:0;overflow:hidden">
  <!-- frame shading -->
  <div class="a" style="left:0;top:0;width:9px;height:969px;background:#f0f0f0"></div><div class="a" style="left:1px;top:0;width:6px;height:969px;background:linear-gradient(#2e2e2e 0,#505050 6px,#8c8c8c 13px,#b8b8b8 19px,#bcbcbc 30px,#c8c8c8 45px,#dadada 60px,#d4d4d4 120px,#d8d8d8 144px,#f0f0f0 150px,#f0f0f0 733px,#dcdcdc 742px,#dcdcdc 790px,#f0f0f0 800px,#f0f0f0 953px,#e4e4e4 962px)"></div><div class="a" style="left:0;top:0;width:1px;height:969px;background:linear-gradient(#c8c8c8,#fff 24px)"></div><div class="a" style="left:7px;top:24px;width:1px;height:940px;background:#fff"></div>
  <div class="a" style="left:0;top:960px;width:640px;height:9px;background:linear-gradient(#f4f4f4 0,#fcfcfc 4px,#dcdcdc 8px,#bdbdbd 9px)"></div>
  <div class="a" style="left:634px;top:0;width:6px;height:969px;background:linear-gradient(90deg,#fff 0 1px,#e4e4e4 1px,#dcdcdc 4px,#cfcfcf)"></div>
  <!-- glass title area -->
  <div class="a" style="left:1px;top:1px;width:638px;height:22px;background:linear-gradient(#3a3a3a 0,#0c0c0c 3px,#050505 13px,#3a3a3a 17px,#a8a8a8 20px,#dedede 22px)"></div>
  <div class="a" style="left:1px;top:22px;width:638px;height:7px;background:linear-gradient(#cfcfcf,#d6d6d6 3px,#dadada)"></div>
  <div class="a" style="left:14px;top:6px;width:372px;height:20px;background:#fff;opacity:.88;filter:blur(6px);border-radius:10px"></div>
  
  <div class="a" style="left:330px;top:14px;width:210px;height:14px;background:#fff;opacity:.5;filter:blur(6px);border-radius:8px"></div>
  <!-- icon -->
  <svg style="left:10px;top:9px" width="15" height="12" viewBox="0 0 15 12"><rect x=".5" y=".5" width="14" height="11" fill="#f4f4f4" stroke="#b8b8b8"/><rect x="1.500" y="2.500" width="7" height="7.500" fill="#3f8f8a"/><path d="M1.500 10 V6 L8.500 2.500 V10Z" fill="#5aa45c" opacity=".8"/><rect x="1.500" y="2.500" width="7" height="3" fill="#3a78b8" opacity=".7"/><rect x="12" y="3" width="1.500" height="3.500" fill="#3a9a5a"/><path d="M9.500 3.500h2M9.500 5.500h2M9.500 7.500h2M9.500 9.500h2" stroke="#c8c8c8" stroke-width=".7"/></svg>
  <div class="t" style="left:31px;top:8px;font-size:12px;letter-spacing:.155px">"D:\C-C++\Bai Thuc Hanh C\else_if\bin\Debug\else_if.exe"</div>
  <!-- caption buttons : x 1173..1276 => left 532..635 -->
  <div class="a" style="left:532px;top:-1px;width:104px;height:20px;border:1px solid #cfcfcf;border-top:0;border-radius:0 0 4px 4px;background:#222;overflow:hidden">
    <div class="a" style="left:0;top:0;width:28px;height:19px;background:linear-gradient(#8b8b8b 0,#6a6a6a 45%,#161616 50%,#2c2c2c 100%);border-right:1px solid #bdbdbd"></div>
    <div class="a" style="left:29px;top:0;width:27px;height:19px;background:linear-gradient(#8b8b8b 0,#6a6a6a 45%,#161616 50%,#2c2c2c 100%);border-right:1px solid #bdbdbd"></div>
    <div class="a" style="left:57px;top:0;width:46px;height:19px;background:linear-gradient(#dcaea2 0,#cf7868 45%,#b8260c 50%,#c2391c 80%,#cf5a3a 100%)"></div>
    <div class="a" style="left:9px;top:10px;width:12px;height:4px;background:#fff;border:1px solid #4a4a52;border-radius:1px"></div>
    <div class="a" style="left:36px;top:5px;width:12px;height:9px;border:2px solid #fff;outline:1px solid #4a4a52;background:#8a8a92;box-shadow:inset 0 0 0 1px #4a4a52"></div>
    <svg style="left:73px;top:4px" width="13" height="11" viewBox="0 0 13 11"><path d="M1 .8 H4 L6.500 3.600 L9 .8 H12 L8.200 5.500 L12 10.200 H9 L6.500 7.400 L4 10.200 H1 L4.800 5.500 Z" fill="#fff" stroke="#4a3a40" stroke-width=".9"/></svg>
  </div>
  <!-- client -->
  <div class="a" style="left:7px;top:29px;width:628px;height:932px;border:1px solid;border-color:#fff #6a6a6a #8a8a8a #fff"></div>
  <div class="a" style="left:8px;top:30px;width:609px;height:913px;background:#000"></div>
  <div id="ctext" class="a" style="left:8px;top:31px"><div>Nhap Diem vao day</div><div>4</div><div>Hoc Sinh Gioi</div><div>&nbsp;</div><div>Process returned 0 (0x0)   execution time : 6.349 s</div><div>Press any key to continue.</div></div>
  <!-- v scrollbar x 1257..1274 => left 617 -->
  <div class="a" style="left:617px;top:30px;width:17px;height:913px;border-top:1px solid #6a6a6a;background:linear-gradient(90deg,#e3e3e3,#efefef 4px,#f3f3f3)"></div>
  <svg style="left:622px;top:36px" width="8" height="6" viewBox="0 0 8 6"><path d="M4 0 L8 5 H0Z" fill="#c6c6c6"/><path d="M0 5.500H8" stroke="#dadada"/></svg>
  <div class="a" style="left:618px;top:49px;width:15px;height:221px;background:linear-gradient(90deg,#f6f6f6 0,#fbfbfb 40%,#e7e7e7 55%,#eeeeee 100%);border:1px solid #bababa;border-radius:2px"></div>
  <svg style="left:622px;top:931px" width="8" height="6" viewBox="0 0 8 6"><path d="M4 6 L8 1 H0Z" fill="#c6c6c6"/></svg>
  <!-- h scrollbar y 944..961 -->
  <div class="a" style="left:8px;top:943px;width:626px;height:17px;background:linear-gradient(#e3e3e3,#efefef 4px,#f3f3f3)"></div>
  <svg style="left:15px;top:948px" width="5" height="8" viewBox="0 0 5 8"><path d="M0 4 L5 0 V8Z" fill="#b8b8b8"/></svg>
  <div class="a" style="left:27px;top:944px;width:544px;height:15px;background:linear-gradient(#f6f6f6 0,#fbfbfb 40%,#e7e7e7 55%,#eeeeee 100%);border:1px solid #bababa;border-radius:2px"></div>
  <svg style="left:606px;top:948px" width="5" height="8" viewBox="0 0 5 8"><path d="M5 4 L0 0 V8Z" fill="#b8b8b8"/></svg>
  <div class="a" style="left:617px;top:943px;width:17px;height:17px;background:#f0f0f0"></div>
  <svg style="left:622px;top:948px" width="11" height="11" viewBox="0 0 11 11"><g fill="#bdbdbd"><rect x="8" y="0" width="2" height="2"/><rect x="4" y="4" width="2" height="2"/><rect x="8" y="4" width="2" height="2"/><rect x="0" y="8" width="2" height="2"/><rect x="4" y="8" width="2" height="2"/><rect x="8" y="8" width="2" height="2"/></g></svg>
</div>
<!-- ===== Taskbar ===== -->
<div id="taskbar" class="a" style="left:0;top:984px;width:1280px;height:40px;background:linear-gradient(#000 0,#000 1px,#6e6e6e 1px,#6e6e6e 2px,#1d1d1d 2px,#111 12px,#0d0d0d 100%);overflow:hidden">
  <div class="a" style="left:520px;top:2px;width:760px;height:38px;background:linear-gradient(90deg,#101010,#1b1b1b 30%,#181818 70%,#1f1f1f)"></div><div class="a" style="left:520px;top:2px;width:760px;height:38px;background:linear-gradient(115deg,transparent 0 4%,rgba(255,255,255,.05) 6% 8%,transparent 10% 15%,rgba(255,255,255,.06) 18% 26%,transparent 29% 38%,rgba(255,255,255,.04) 40% 43%,transparent 45% 50%,rgba(255,255,255,.06) 53% 66%,transparent 70%)"></div>
  <!-- start orb -->
  <svg style="left:7px;top:1px" width="40" height="40" viewBox="0 0 40 40"><defs>
    <radialGradient id="og" cx=".5" cy=".95" r=".95"><stop offset="0" stop-color="#35d4ff"/><stop offset=".35" stop-color="#1c86d8"/><stop offset=".75" stop-color="#123f86"/><stop offset="1" stop-color="#3a5f98"/></radialGradient>
    <linearGradient id="oh" x1="0" y1="0" x2="0" y2="1"><stop offset="0" stop-color="#fff" stop-opacity=".75"/><stop offset="1" stop-color="#fff" stop-opacity=".08"/></linearGradient></defs>
    <circle cx="20" cy="20" r="18.600" fill="url(#og)" stroke="#5a7aa8" stroke-width="1.200"/>
    <path d="M3.500 16 A17 17 0 0 1 36.500 16 Q20 23 3.500 16Z" fill="url(#oh)"/>
    <path d="M11.500 12.500 Q15 10.500 18.500 12.500 L17 19 Q13.500 17.300 10 19Z" fill="#f4642a"/>
    <path d="M20.300 13 Q24 15 28.500 12.800 L27 19.500 Q23 21.500 18.800 19.500Z" fill="#8ccc3c"/>
    <path d="M9.500 20.800 Q13 19 16.600 21 L15 27.500 Q11.500 25.500 8 27.500Z" fill="#3aa0ee"/>
    <path d="M18.300 21.500 Q22.500 23.500 26.600 21.500 L25 28 Q21 30 16.800 28Z" fill="#fcc22c"/>
  </svg>
  <!-- notepad++ -->
  <svg style="left:76px;top:3px" width="31" height="33" viewBox="0 0 31 33"><defs><linearGradient id="ng" x1="0" y1="0" x2="0" y2="1"><stop offset="0" stop-color="#fff"/><stop offset=".42" stop-color="#f2f6e8"/><stop offset=".5" stop-color="#c6e67e"/><stop offset="1" stop-color="#2fa61a"/></linearGradient></defs>
    <path d="M1 1.500 H19 L24 6.500 V31.500 H1Z" fill="url(#ng)" stroke="#9a9a9a" stroke-width="1.200"/>
    <path d="M2.500 4.500H20M2.500 6.500H21M2.500 8.500H22M2.500 10.500H22M2.500 12.500H22" stroke="#cfd6e4" stroke-width=".7"/>
    <path d="M19 1.500 V6.500 H24Z" fill="#d8d8d8" stroke="#9a9a9a" stroke-width=".8"/>
    <path d="M7.500 20 V11.500 Q7.500 10 9 10 Q10.500 10 10.500 11.500 V20" fill="#fff" stroke="#111" stroke-width="1.300"/>
    <path d="M12 15h4M14 13v4M16.500 15h4M18.500 13v4" stroke="#111" stroke-width="1.100"/>
    <path d="M17 25.500 L27 4.500 L30 6 L20 26.500Z" fill="#f2a21a" stroke="#b46a08" stroke-width=".7"/><path d="M17 25.500 L16.500 28.500 L20 26.500Z" fill="#e8d0a0" stroke="#6a4a10" stroke-width=".5"/><path d="M27 4.500 L28.200 2 L31 3.500 L30 6Z" fill="#d83a3a"/>
  </svg>
  <!-- sublime -->
  <svg style="left:141px;top:4px" width="32" height="29" viewBox="0 0 32 29"><defs><linearGradient id="sg" x1="0" y1="0" x2="0" y2="1"><stop offset="0" stop-color="#6a6a6a"/><stop offset="1" stop-color="#3c3c3c"/></linearGradient></defs>
    <path d="M1 6 Q1 3 4 3 H28 Q31 3 31 6 V25 Q31 27.500 28 27.500 H4 Q1 27.500 1 25Z" fill="#f4f4f4"/>
    <path d="M4 3 Q4 .8 6.500 .8 H25.500 Q28 .8 28 3 V20 Q28 22 25.500 22 H6.500 Q4 22 4 20Z" fill="url(#sg)"/>
    <path d="M3 22 H29 V24 Q29 25 27.500 25 H4.500 Q3 25 3 24Z" fill="#2e2e2e"/>
    <text x="10.500" y="17.500" font-family="Liberation Sans,sans-serif" font-weight="bold" font-size="18" fill="#ff9a1e">S</text>
  </svg>
  <!-- firefox -->
  <svg style="left:207px;top:3px" width="32" height="32" viewBox="0 0 32 32"><defs><radialGradient id="fg" cx=".55" cy=".35" r=".6"><stop offset="0" stop-color="#3ab4f0"/><stop offset=".6" stop-color="#1a5cc0"/><stop offset="1" stop-color="#12307a"/></radialGradient><linearGradient id="ff" x1="0" y1="0" x2=".4" y2="1"><stop offset="0" stop-color="#ffce2a"/><stop offset=".45" stop-color="#f88a14"/><stop offset="1" stop-color="#e2421a"/></linearGradient></defs>
    <circle cx="17" cy="14" r="11.500" fill="url(#fg)"/>
    <path d="M4.500 5 Q3.500 7 4.300 9.500 Q1.500 13 1.500 18 Q2 27 10.500 30.500 Q20 33.500 27 27 Q32.500 21 30.500 12 Q29.500 7 26 4 Q28.500 9.500 27.500 14 Q26.500 21.500 19.500 23.500 Q13 24.500 10.500 20.500 Q13.500 21.500 16.500 19 Q13 19.500 11.500 17 Q10.500 14.500 12.500 13.500 Q14.500 14 16 12.500 L12.500 11 Q11 9.500 12.500 7.500 Q9 7.500 7.500 9.500 Q5.500 8 4.500 5Z" fill="url(#ff)"/>
    <path d="M26 4 Q30 9 30 15 Q30 22 25 27 Q28 21 27.500 14 Q28.500 9.500 26 4Z" fill="#ffd83a"/>
  </svg>
  <!-- snipping tool -->
  <svg style="left:273px;top:3px" width="32" height="32" viewBox="0 0 32 32">
    <ellipse cx="11.500" cy="20" rx="10" ry="5.500" fill="#8a8a8a" transform="rotate(-10 11.500 20)"/><ellipse cx="11.500" cy="20" rx="10" ry="5.500" fill="none" stroke="#c03030" stroke-width=".8" opacity=".7" transform="rotate(-10 11.500 20)"/>
    <ellipse cx="12.500" cy="10" rx="10.500" ry="7.500" fill="#f2f2f4" stroke="#e0201c" stroke-width="1.500" transform="rotate(-14 12.500 10)"/>
    <path d="M5 5.500 L16.500 19 M10.500 3.500 L14 19.500" stroke="#4a4a4a" stroke-width="1.500"/><path d="M5.500 6 L16 18.500 M10.800 4 L14 19" stroke="#c8c8c8" stroke-width=".6"/>
    <ellipse cx="23" cy="21" rx="5.800" ry="2.800" fill="none" stroke="#1a9ae0" stroke-width="2" transform="rotate(32 23 21)"/>
    <ellipse cx="15" cy="26" rx="2.800" ry="5.200" fill="none" stroke="#1a9ae0" stroke-width="2" transform="rotate(-14 15 26)"/>
  </svg>
  <!-- chrome button -->
  <div class="a tbtn" style="left:324px;width:62px"></div>
  <svg style="left:339px;top:4px" width="32" height="32" viewBox="0 0 32 32">
    <circle cx="16" cy="16" r="15" fill="#dd4b3e"/>
    <path d="M16 16 L3 8.500 A15 15 0 0 0 13.500 30.800 L20 19.500Z" fill="#1ea362"/>
    <path d="M16 16 L22.500 19.800 L13.500 30.800 A15 15 0 0 0 29 8.500 H16Z" fill="#ffcd40"/>
    <path d="M16 1 A15 15 0 0 1 29 8.500 H16 L9.500 12.300 L3 8.500 A15 15 0 0 1 16 1Z" fill="#dd4b3e"/>
    <circle cx="16" cy="16" r="7" fill="#fff"/><circle cx="16" cy="16" r="5.500" fill="#4c8bf5"/>
  </svg>
  <!-- CB button -->
  <div class="a tbtn" style="left:390px;width:62px"></div>
  <svg style="left:406px;top:4px" width="31" height="32" viewBox="0 0 31 32">
    <path d="M1 1 L29.500 1.500 L29 27 L3 31.500Z" fill="#0a0a0a"/>
    <path d="M1.500 1.500 L15 1 L15 14 L1.500 16Z" fill="#d8241c"/><path d="M1.500 1.500 L15 1 L15 5 L1.500 6.500Z" fill="#f47068" opacity=".55"/>
    <path d="M17.500 1 L29.500 1.500 L29 13 L17.500 14Z" fill="#44c426"/><path d="M17.500 1 L29.500 1.500 L29.500 5 L17.500 5Z" fill="#98ee84" opacity=".5"/>
    <path d="M2 18 L15 16 L15 28.500 L3.500 31Z" fill="#d8cc24"/><path d="M2 18 L15 16 L15 19.500 L2.300 21.500Z" fill="#f4ee88" opacity=".5"/>
    <path d="M17.500 15.500 L29 14.500 L28.500 26 L17.500 28.500Z" fill="#5a1ed8"/><path d="M17.500 15.500 L29 14.500 L29 17.500 L17.500 19Z" fill="#9a78f4" opacity=".45"/>
  </svg>
  <!-- console button (active) -->
  <div class="a" style="left:456px;top:1px;width:62px;height:40px;background:linear-gradient(#8e8e8e 0,#7c7c7c 45%,#686868 50%,#7e7e7e 100%);border:1px solid #ececec;border-radius:2px"></div>
  <svg style="left:472px;top:7px" width="29" height="25" viewBox="0 0 29 25"><defs><linearGradient id="cg" x1="0" y1="0" x2=".6" y2="1"><stop offset="0" stop-color="#3f7fc0"/><stop offset="1" stop-color="#4fae78"/></linearGradient></defs>
    <rect x=".5" y=".5" width="28" height="23.500" fill="#f8f8f8" stroke="#d6d6d6"/><rect x=".5" y=".5" width="28" height="2.500" fill="#e2e4ea"/>
    <path d="M22.500 1.700h1.200M24.800 1.700h1.200M27 1.700h1" stroke="#3a5aa8" stroke-width="1.100"/>
    <rect x="2.500" y="5" width="11.500" height="15.500" fill="url(#cg)" stroke="#a8b8c8" stroke-width=".8"/>
    <path d="M16 7h6M16 9.500h6M16 12h6M16 14.500h6M16 17h6M16 19.500h6" stroke="#c2c2c2" stroke-width=".9"/>
    <rect x="24" y="5" width="2" height="8.500" fill="#3a9a5a"/><rect x="24" y="5" width="2" height="3.500" fill="#3a6ab8"/>
  </svg>
  <!-- tray -->
  <svg style="left:1127px;top:19px" width="8" height="5" viewBox="0 0 8 5"><path d="M4 0 L8 4.500 H0Z" fill="#fff"/></svg>
  <svg style="left:1147px;top:13px" width="16" height="16" viewBox="0 0 16 16"><rect x="5" y="3.500" width="9.500" height="7.500" fill="#1a1a1a" stroke="#f4f4f4" stroke-width="1.300"/><path d="M9.700 11 V13.500 M6.500 14 H13" stroke="#f4f4f4" stroke-width="1.400"/><path d="M2.500 1 V5 M1 2.500 V5.500 H4 V2.500 M2.500 5.500 V10.500 H5" stroke="#f4f4f4" stroke-width="1.100" fill="none"/></svg>
  <svg style="left:1171px;top:13px" width="16" height="16" viewBox="0 0 16 16"><path d="M1 5.500 H3.500 L7.500 1.500 V14.500 L3.500 10.500 H1Z" fill="#f4f4f4" stroke="#9a9a9a" stroke-width=".6"/><path d="M9.500 5.500 Q11 8 9.500 10.500 M11.500 3.800 Q14 8 11.500 12.200 M13.300 2.300 Q16.500 8 13.300 13.700" stroke="#e8e8e8" stroke-width="1.100" fill="none"/></svg>
  <div class="t" style="left:1206px;top:6px;color:#fff;font-size:12px;letter-spacing:-.35px">20:11 PM</div>
  <div class="t" style="left:1204px;top:23px;color:#fff;font-size:12px;letter-spacing:-.3px">26/3/2017</div>
  <div class="a" style="left:1266px;top:2px;width:15px;height:39px;background:linear-gradient(#2c2c2c,#161616);border:1px solid #5c5c5c;border-left:1px solid #4a4a4a"></div>
</div>
</body></html>
